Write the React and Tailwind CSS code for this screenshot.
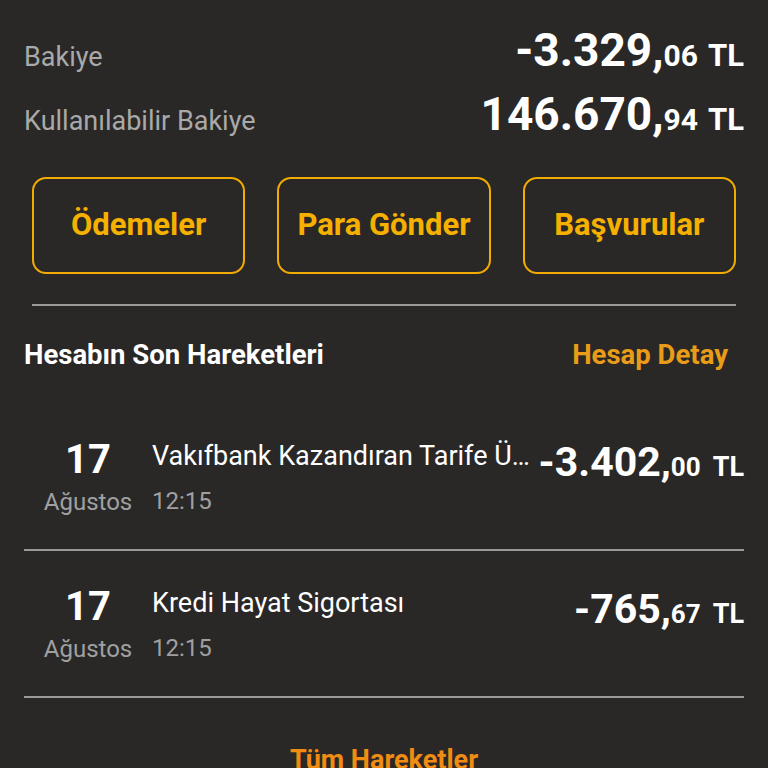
import React from 'react';

const balances = [
  { label: 'Bakiye', main: '-3.329,', dec: '06' },
  { label: 'Kullanılabilir Bakiye', main: '146.670,', dec: '94' },
];

const actions = ['Ödemeler', 'Para Gönder', 'Başvurular'];

const moves = [
  { day: '17', month: 'Ağustos', title: 'Vakıfbank Kazandıran Tarife Ücreti Tahsilatı', time: '12:15', main: '-3.402,', dec: '00' },
  { day: '17', month: 'Ağustos', title: 'Kredi Hayat Sigortası', time: '12:15', main: '-765,', dec: '67' },
];

const App = () => {
  return (
    <div
      className="min-h-[768px] w-[768px] overflow-hidden bg-[#292827]"
      style={{ fontFamily: 'Roboto, "Noto Sans", sans-serif' }}
    >
      {/* balances */}
      <div className="px-6 pt-[18px]">
        {balances.map((b) => (
          <div key={b.label} className="flex h-[64px] items-baseline justify-between leading-[64px]">
            <span className="text-[27px] text-[#a9a9a9]">{b.label}</span>
            <span className="whitespace-nowrap font-bold text-white">
              <span className="text-[46px]">{b.main}</span>
              <span className="text-[30px]">{b.dec}</span>
              <span className="ml-[10px] text-[31px]">TL</span>
            </span>
          </div>
        ))}
      </div>

      {/* quick actions */}
      <div className="mx-8 mt-[31px] grid grid-cols-3 gap-8">
        {actions.map((a) => (
          <button
            key={a}
            className="flex h-[97px] items-center justify-center rounded-[14px] border-2 border-[#f2ab00] text-[31px] font-bold text-[#f5b000]"
          >
            {a}
          </button>
        ))}
      </div>

      <div className="mx-8 mt-[30px] h-[2px] bg-[#9a9a9a]" />

      <div className="flex items-center justify-between pl-6 pr-10 pt-[34px] pb-[32px]">
        <span className="text-[27.5px] font-bold leading-[30px] text-white">Hesabın Son Hareketleri</span>
        <span className="text-[27.5px] font-bold leading-[30px] text-[#e99c18]">Hesap Detay</span>
      </div>

      {/* recent transactions */}
      <div className="mx-6 mt-[2px]">
        {moves.map((m, i) => (
          <div key={i} className="flex h-[147px] items-start border-b-2 border-[#9a9a9a] pt-[36px]">
            <div className="flex w-[128px] shrink-0 flex-col items-center">
              <span className="text-[40px] font-bold leading-[40px] text-white">{m.day}</span>
              <span className="mt-[2px] text-[24px] leading-[40px] text-[#a0a0a0]">{m.month}</span>
            </div>
            <div className="flex min-w-0 flex-1 flex-col">
              <span className="truncate text-[27px] leading-[32px] text-white">{m.title}</span>
              <span className="mt-[14px] text-[24px] leading-[30px] text-[#a0a0a0]">{m.time}</span>
            </div>
            <div className="shrink-0 whitespace-nowrap font-bold leading-[44px] text-white">
              <span className="text-[41px]">{m.main}</span>
              <span className="text-[26px]">{m.dec}</span>
              <span className="ml-[12px] text-[27px]">TL</span>
            </div>
          </div>
        ))}
      </div>

      <div className="pt-[42px] text-center">
        <span className="text-[27px] font-bold text-[#f08c12]">Tüm Hareketler</span>
      </div>
    </div>
  );
};

export default App;
